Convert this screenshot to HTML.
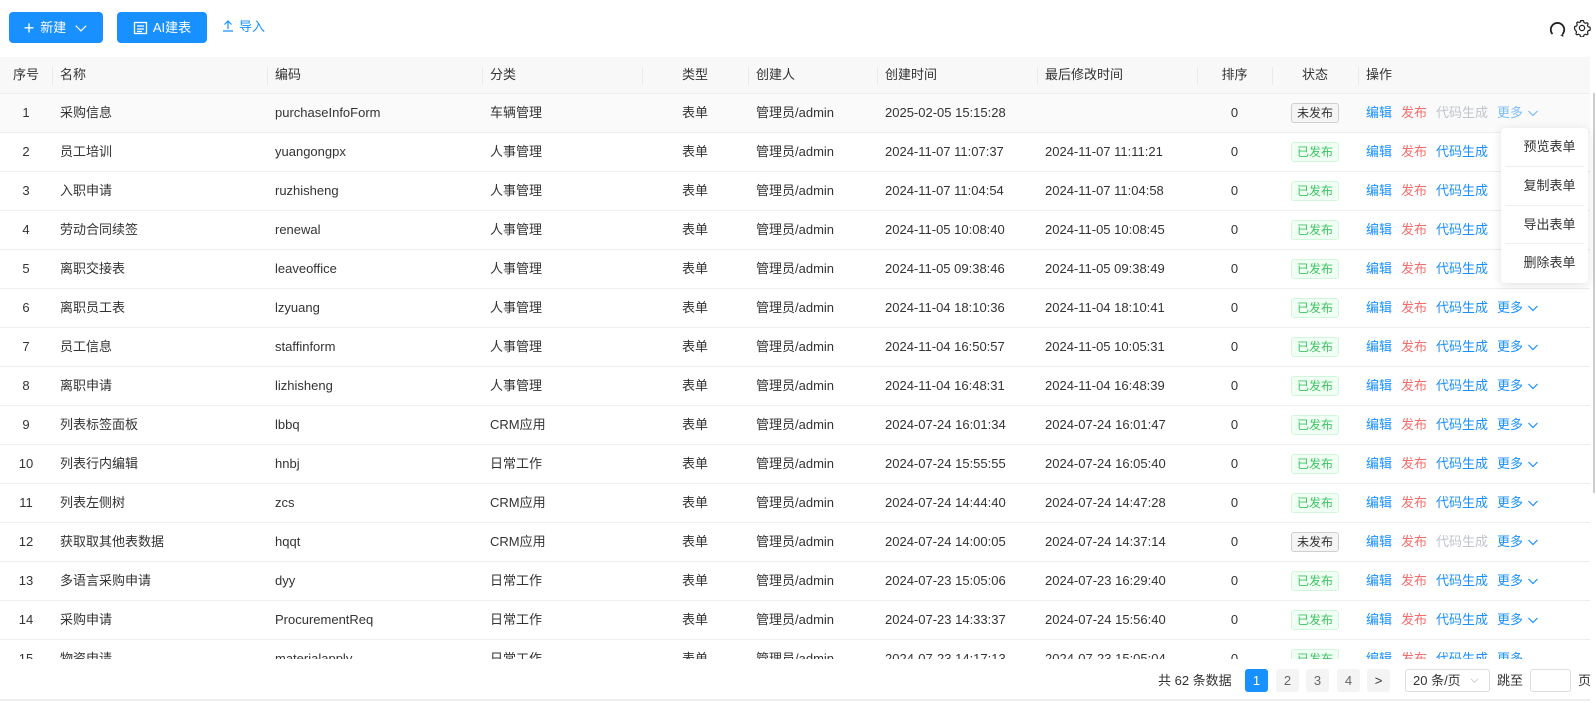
<!DOCTYPE html>
<html><head><meta charset="utf-8"><style>
*{box-sizing:border-box;margin:0;padding:0}
body{width:1596px;height:703px;background:#fff;font-family:"Liberation Sans","Noto Sans CJK SC",sans-serif;font-size:13px;color:#333;position:relative;overflow:hidden;line-height:20px}
.btn{position:absolute;top:12px;height:31px;background:#1890ff;color:#fff;border-radius:4px;display:flex;align-items:center;justify-content:center;font-size:13px}
.wrap{position:absolute;left:0;top:57px;width:1590px;height:602px;overflow:hidden}
table{border-collapse:collapse;table-layout:fixed;width:1590px}
th{height:36px;background:#f8f8f8;font-weight:normal;text-align:left;padding-left:8px;position:relative;color:#333;border-bottom:1px solid #eee;line-height:20px}
th.s:after{content:"";position:absolute;left:0;top:10px;height:18px;border-left:1px solid #eaeaea}
td{height:39px;border-bottom:1px solid #eee;padding-left:8px;white-space:nowrap;overflow:hidden;line-height:20px;vertical-align:middle}
.c{text-align:center;padding-left:0}
tr.h td{background:#fafafa}
.tag{display:inline-block;height:20px;line-height:18px;padding:0 5px;border-radius:3px;font-size:12px;vertical-align:middle}
.ok{background:#f0fff3;border:1px solid #d3f5dc;color:#3fc463}
.no{background:#f5f5f5;border:1px solid #cfcfcf;color:#333}
.a{color:#1890ff;margin-right:9px}.r{color:#f56c6c;margin-right:9px}.g{color:#c0c4cc;margin-right:9px}
.m{color:#1890ff}.m svg{vertical-align:-2px;margin-left:4px}
.dd{position:absolute;left:1501px;top:128px;width:87px;height:155px;background:#fff;border-radius:4px;box-shadow:0 2px 10px rgba(0,0,0,.12);padding:0 4px}
.dd div{height:38.75px;line-height:38.75px;text-align:center;color:#333;border-bottom:1px solid #eee;padding-left:10px}
.dd div:last-child{border:none}
.pg{position:absolute;top:669px;height:23px;font-size:13px;display:flex;align-items:center;justify-content:center;border-radius:3px}
</style></head><body>
<div class="btn" style="left:9px;width:94px"><span style="font-size:18px;margin-right:6px;line-height:1">+</span>新建<svg width="14" height="14" style="margin-left:8px" viewBox="0 0 12 12"><path d="M1.5 4l4.5 4.5L10.5 4" stroke="#fff" fill="none" stroke-width="1"/></svg></div>
<div class="btn" style="left:117px;width:90px"><svg width="15" height="14" viewBox="0 0 15 14" style="margin-right:5px"><rect x="1.5" y="1.5" width="12" height="11" fill="none" stroke="#fff" stroke-width="1.3"/><path d="M4 5h7M4 8h7M4 10.5h5" stroke="#fff" stroke-width="1.2"/></svg>AI建表</div>
<div style="position:absolute;left:222px;top:17px;color:#1890ff;font-size:13px"><svg width="12" height="13" viewBox="0 0 12 13" style="vertical-align:-1px;margin-right:5px"><path d="M6 10V2M2.5 5.5L6 2l3.5 3.5M1 12h10" stroke="#1890ff" fill="none" stroke-width="1.2"/></svg>导入</div>
<svg style="position:absolute;left:1548px;top:19px" width="19" height="19" viewBox="0 0 17 17"><path d="M4 13.5A6 6 0 1 1 13 13.5" fill="none" stroke="#222" stroke-width="1.6"/><path d="M11 14.5l2.5-1.3 0.3 2.8" fill="#222"/></svg>
<svg style="position:absolute;left:1573px;top:19px" width="18" height="18" viewBox="0 0 24 24"><path d="M12 2l2 .3.6 2.4 1.8 1 2.3-.8 1.4 1.4-.8 2.3 1 1.8 2.4.6.3 2-.3 2-2.4.6-1 1.8.8 2.3-1.4 1.4-2.3-.8-1.8 1-.6 2.4-2 .3-2-.3-.6-2.4-1.8-1-2.3.8-1.4-1.4.8-2.3-1-1.8L2.3 14 2 12l.3-2 2.4-.6 1-1.8-.8-2.3 1.4-1.4 2.3.8 1.8-1L10 2.3z" fill="none" stroke="#222" stroke-width="1.6" stroke-linejoin="round"/><circle cx="12" cy="12" r="3.5" fill="none" stroke="#222" stroke-width="1.6"/></svg>
<div class="wrap"><table>
<colgroup><col style="width:52px"><col style="width:215px"><col style="width:215px"><col style="width:160px"><col style="width:106px"><col style="width:129px"><col style="width:160px"><col style="width:160px"><col style="width:75px"><col style="width:86px"><col></colgroup>
<thead><tr><th class="c">序号</th><th class="s">名称</th><th class="s">编码</th><th class="s">分类</th><th class="s c">类型</th><th class="s">创建人</th><th class="s">创建时间</th><th class="s">最后修改时间</th><th class="s c">排序</th><th class="s c">状态</th><th class="s">操作</th></tr></thead>
<tbody>
<tr class="h"><td class="c">1</td><td>采购信息</td><td>purchaseInfoForm</td><td>车辆管理</td><td class="c">表单</td><td>管理员/admin</td><td>2025-02-05 15:15:28</td><td></td><td class="c">0</td><td class="c"><span class="tag no">未发布</span></td><td><span class="a">编辑</span><span class="r">发布</span><span class="g">代码生成</span><span class="m" style="color:#7cbcfc">更多<svg width="12" height="12" viewBox="0 0 12 12"><path d="M1.5 4l4.5 4.5L10.5 4" stroke="#7cbcfc" fill="none" stroke-width="1.2"/></svg></span></td></tr>
<tr><td class="c">2</td><td>员工培训</td><td>yuangongpx</td><td>人事管理</td><td class="c">表单</td><td>管理员/admin</td><td>2024-11-07 11:07:37</td><td>2024-11-07 11:11:21</td><td class="c">0</td><td class="c"><span class="tag ok">已发布</span></td><td><span class="a">编辑</span><span class="r">发布</span><span class="a">代码生成</span></td></tr>
<tr><td class="c">3</td><td>入职申请</td><td>ruzhisheng</td><td>人事管理</td><td class="c">表单</td><td>管理员/admin</td><td>2024-11-07 11:04:54</td><td>2024-11-07 11:04:58</td><td class="c">0</td><td class="c"><span class="tag ok">已发布</span></td><td><span class="a">编辑</span><span class="r">发布</span><span class="a">代码生成</span></td></tr>
<tr><td class="c">4</td><td>劳动合同续签</td><td>renewal</td><td>人事管理</td><td class="c">表单</td><td>管理员/admin</td><td>2024-11-05 10:08:40</td><td>2024-11-05 10:08:45</td><td class="c">0</td><td class="c"><span class="tag ok">已发布</span></td><td><span class="a">编辑</span><span class="r">发布</span><span class="a">代码生成</span></td></tr>
<tr><td class="c">5</td><td>离职交接表</td><td>leaveoffice</td><td>人事管理</td><td class="c">表单</td><td>管理员/admin</td><td>2024-11-05 09:38:46</td><td>2024-11-05 09:38:49</td><td class="c">0</td><td class="c"><span class="tag ok">已发布</span></td><td><span class="a">编辑</span><span class="r">发布</span><span class="a">代码生成</span></td></tr>
<tr><td class="c">6</td><td>离职员工表</td><td>lzyuang</td><td>人事管理</td><td class="c">表单</td><td>管理员/admin</td><td>2024-11-04 18:10:36</td><td>2024-11-04 18:10:41</td><td class="c">0</td><td class="c"><span class="tag ok">已发布</span></td><td><span class="a">编辑</span><span class="r">发布</span><span class="a">代码生成</span><span class="m">更多<svg width="12" height="12" viewBox="0 0 12 12"><path d="M1.5 4l4.5 4.5L10.5 4" stroke="#1890ff" fill="none" stroke-width="1.2"/></svg></span></td></tr>
<tr><td class="c">7</td><td>员工信息</td><td>staffinform</td><td>人事管理</td><td class="c">表单</td><td>管理员/admin</td><td>2024-11-04 16:50:57</td><td>2024-11-05 10:05:31</td><td class="c">0</td><td class="c"><span class="tag ok">已发布</span></td><td><span class="a">编辑</span><span class="r">发布</span><span class="a">代码生成</span><span class="m">更多<svg width="12" height="12" viewBox="0 0 12 12"><path d="M1.5 4l4.5 4.5L10.5 4" stroke="#1890ff" fill="none" stroke-width="1.2"/></svg></span></td></tr>
<tr><td class="c">8</td><td>离职申请</td><td>lizhisheng</td><td>人事管理</td><td class="c">表单</td><td>管理员/admin</td><td>2024-11-04 16:48:31</td><td>2024-11-04 16:48:39</td><td class="c">0</td><td class="c"><span class="tag ok">已发布</span></td><td><span class="a">编辑</span><span class="r">发布</span><span class="a">代码生成</span><span class="m">更多<svg width="12" height="12" viewBox="0 0 12 12"><path d="M1.5 4l4.5 4.5L10.5 4" stroke="#1890ff" fill="none" stroke-width="1.2"/></svg></span></td></tr>
<tr><td class="c">9</td><td>列表标签面板</td><td>lbbq</td><td>CRM应用</td><td class="c">表单</td><td>管理员/admin</td><td>2024-07-24 16:01:34</td><td>2024-07-24 16:01:47</td><td class="c">0</td><td class="c"><span class="tag ok">已发布</span></td><td><span class="a">编辑</span><span class="r">发布</span><span class="a">代码生成</span><span class="m">更多<svg width="12" height="12" viewBox="0 0 12 12"><path d="M1.5 4l4.5 4.5L10.5 4" stroke="#1890ff" fill="none" stroke-width="1.2"/></svg></span></td></tr>
<tr><td class="c">10</td><td>列表行内编辑</td><td>hnbj</td><td>日常工作</td><td class="c">表单</td><td>管理员/admin</td><td>2024-07-24 15:55:55</td><td>2024-07-24 16:05:40</td><td class="c">0</td><td class="c"><span class="tag ok">已发布</span></td><td><span class="a">编辑</span><span class="r">发布</span><span class="a">代码生成</span><span class="m">更多<svg width="12" height="12" viewBox="0 0 12 12"><path d="M1.5 4l4.5 4.5L10.5 4" stroke="#1890ff" fill="none" stroke-width="1.2"/></svg></span></td></tr>
<tr><td class="c">11</td><td>列表左侧树</td><td>zcs</td><td>CRM应用</td><td class="c">表单</td><td>管理员/admin</td><td>2024-07-24 14:44:40</td><td>2024-07-24 14:47:28</td><td class="c">0</td><td class="c"><span class="tag ok">已发布</span></td><td><span class="a">编辑</span><span class="r">发布</span><span class="a">代码生成</span><span class="m">更多<svg width="12" height="12" viewBox="0 0 12 12"><path d="M1.5 4l4.5 4.5L10.5 4" stroke="#1890ff" fill="none" stroke-width="1.2"/></svg></span></td></tr>
<tr><td class="c">12</td><td>获取取其他表数据</td><td>hqqt</td><td>CRM应用</td><td class="c">表单</td><td>管理员/admin</td><td>2024-07-24 14:00:05</td><td>2024-07-24 14:37:14</td><td class="c">0</td><td class="c"><span class="tag no">未发布</span></td><td><span class="a">编辑</span><span class="r">发布</span><span class="g">代码生成</span><span class="m">更多<svg width="12" height="12" viewBox="0 0 12 12"><path d="M1.5 4l4.5 4.5L10.5 4" stroke="#1890ff" fill="none" stroke-width="1.2"/></svg></span></td></tr>
<tr><td class="c">13</td><td>多语言采购申请</td><td>dyy</td><td>日常工作</td><td class="c">表单</td><td>管理员/admin</td><td>2024-07-23 15:05:06</td><td>2024-07-23 16:29:40</td><td class="c">0</td><td class="c"><span class="tag ok">已发布</span></td><td><span class="a">编辑</span><span class="r">发布</span><span class="a">代码生成</span><span class="m">更多<svg width="12" height="12" viewBox="0 0 12 12"><path d="M1.5 4l4.5 4.5L10.5 4" stroke="#1890ff" fill="none" stroke-width="1.2"/></svg></span></td></tr>
<tr><td class="c">14</td><td>采购申请</td><td>ProcurementReq</td><td>日常工作</td><td class="c">表单</td><td>管理员/admin</td><td>2024-07-23 14:33:37</td><td>2024-07-24 15:56:40</td><td class="c">0</td><td class="c"><span class="tag ok">已发布</span></td><td><span class="a">编辑</span><span class="r">发布</span><span class="a">代码生成</span><span class="m">更多<svg width="12" height="12" viewBox="0 0 12 12"><path d="M1.5 4l4.5 4.5L10.5 4" stroke="#1890ff" fill="none" stroke-width="1.2"/></svg></span></td></tr>
<tr><td class="c">15</td><td>物资申请</td><td>materialapply</td><td>日常工作</td><td class="c">表单</td><td>管理员/admin</td><td>2024-07-23 14:17:13</td><td>2024-07-23 15:05:04</td><td class="c">0</td><td class="c"><span class="tag ok">已发布</span></td><td><span class="a">编辑</span><span class="r">发布</span><span class="a">代码生成</span><span class="m">更多</span></td></tr>
</tbody></table></div>
<div style="position:absolute;left:1593px;top:93px;width:2px;height:400px;background:#ccc"></div>
<div class="dd"><div>预览表单</div><div>复制表单</div><div>导出表单</div><div>删除表单</div></div>
<div style="position:absolute;left:1158px;top:671px;font-size:13px">共 62 条数据</div>
<div class="pg" style="left:1245px;width:23px;background:#1890ff;color:#fff">1</div>
<div class="pg" style="left:1276px;width:23px;background:#f4f4f5;color:#666">2</div>
<div class="pg" style="left:1306px;width:23px;background:#f4f4f5;color:#666">3</div>
<div class="pg" style="left:1337px;width:23px;background:#f4f4f5;color:#666">4</div>
<div class="pg" style="left:1367px;width:23px;background:#f4f4f5;color:#333">&gt;</div>
<div class="pg" style="left:1405px;width:85px;border:1px solid #ddd;justify-content:flex-start;padding-left:7px;color:#333;height:23px">20 条/页<svg width="11" height="11" viewBox="0 0 12 12" style="margin-left:8px"><path d="M2 4l4 4 4-4" stroke="#ccc" fill="none"/></svg></div>
<div style="position:absolute;left:1497px;top:671px">跳至</div>
<div class="pg" style="left:1530px;width:41px;border:1px solid #ddd"></div>
<div style="position:absolute;left:1578px;top:671px">页</div>
<div style="position:absolute;left:0;top:699px;width:1590px;height:2px;background:#eee"></div>
</body></html>
